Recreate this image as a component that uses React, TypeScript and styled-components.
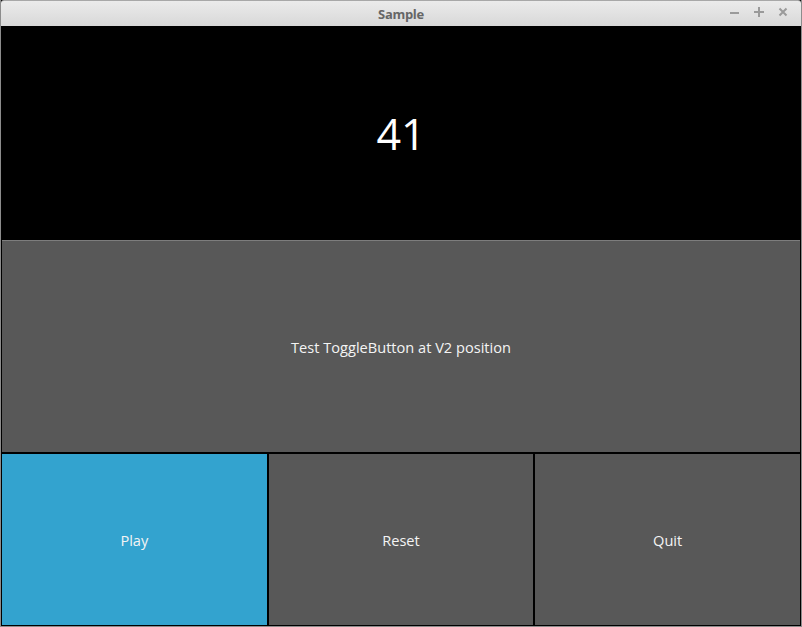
import React from "react";
import styled, { createGlobalStyle } from "styled-components";

const Global = createGlobalStyle`
  html, body { margin: 0; padding: 0; background: #000; }
  body { font-family: "Open Sans", "DejaVu Sans", sans-serif; }
  #root { width: 802px; height: 627px; }
`;

const Frame = styled.div`
  width: 802px;
  height: 627px;
  box-sizing: border-box;
  border: 1px solid #8c8c8c;
  border-top: none;
  display: flex;
  flex-direction: column;
  background: #000;
  overflow: hidden;
`;

const TitleBar = styled.div`
  height: 26px;
  flex: none;
  position: relative;
  display: flex;
  align-items: center;
  justify-content: center;
  background: linear-gradient(#ebebeb, #d8d8d8);
  border-top: 1px solid #a8a8a8;
  box-sizing: border-box;
  border-radius: 3px 3px 0 0;
`;

const Title = styled.span`
  font-family: "Open Sans", "DejaVu Sans", sans-serif;
  font-size: 13px;
  font-weight: 700;
  color: #666;
  letter-spacing: -0.3px;
`;

const Controls = styled.div`
  position: absolute;
  right: 12px;
  top: 5px;
  display: flex;
  gap: 12px;
  align-items: center;
`;

const Ctl = styled.svg`
  width: 12px;
  height: 12px;
  display: block;
`;

const Body = styled.div`
  flex: 1;
  display: flex;
  flex-direction: column;
  background: #000;
`;

const Display = styled.div`
  height: 214px;
  flex: none;
  display: flex;
  align-items: center;
  justify-content: center;
  color: #fff;
  font-size: 43px;
  font-family: "Open Sans", "DejaVu Sans", sans-serif;
`;

const Toggle = styled.div`
  height: 212px;
  flex: none;
  box-sizing: border-box;
  margin: 0 1px;
  padding-top: 1px;
  background: #585858;
  border-top: 1px solid #7d7d7d;
  display: flex;
  align-items: center;
  justify-content: center;
  color: #f4f4f4;
  font-size: 14.6px;
`;

const Row = styled.div`
  flex: 1;
  display: grid;
  grid-template-columns: repeat(3, 1fr);
  gap: 2px;
  padding: 2px 1px 1px 1px;
`;

const Btn = styled.div<{ $active?: boolean }>`
  background: ${(p) => (p.$active ? "#33a3cf" : "#585858")};
  display: flex;
  align-items: center;
  justify-content: center;
  color: #f4f4f4;
  font-size: 14.6px;
`;

export default function App() {
  return (
    <>
      <Global />
      <Frame>
        <TitleBar>
          <Title>Sample</Title>
          <Controls>
            <Ctl viewBox="0 0 12 12">
              <rect x="1" y="6" width="9" height="2" fill="#9a9a9a" />
            </Ctl>
            <Ctl viewBox="0 0 12 12">
              <rect x="1" y="5" width="10" height="2" fill="#9a9a9a" />
              <rect x="5" y="1" width="2" height="10" fill="#9a9a9a" />
            </Ctl>
            <Ctl viewBox="0 0 12 12">
              <path d="M2.5 2.5 L9.5 9.5 M9.5 2.5 L2.5 9.5" stroke="#9a9a9a" strokeWidth="2" />
            </Ctl>
          </Controls>
        </TitleBar>
        <Body>
          <Display>41</Display>
          <Toggle>Test ToggleButton at V2 position</Toggle>
          <Row>
            <Btn $active>Play</Btn>
            <Btn>Reset</Btn>
            <Btn>Quit</Btn>
          </Row>
        </Body>
      </Frame>
    </>
  );
}
